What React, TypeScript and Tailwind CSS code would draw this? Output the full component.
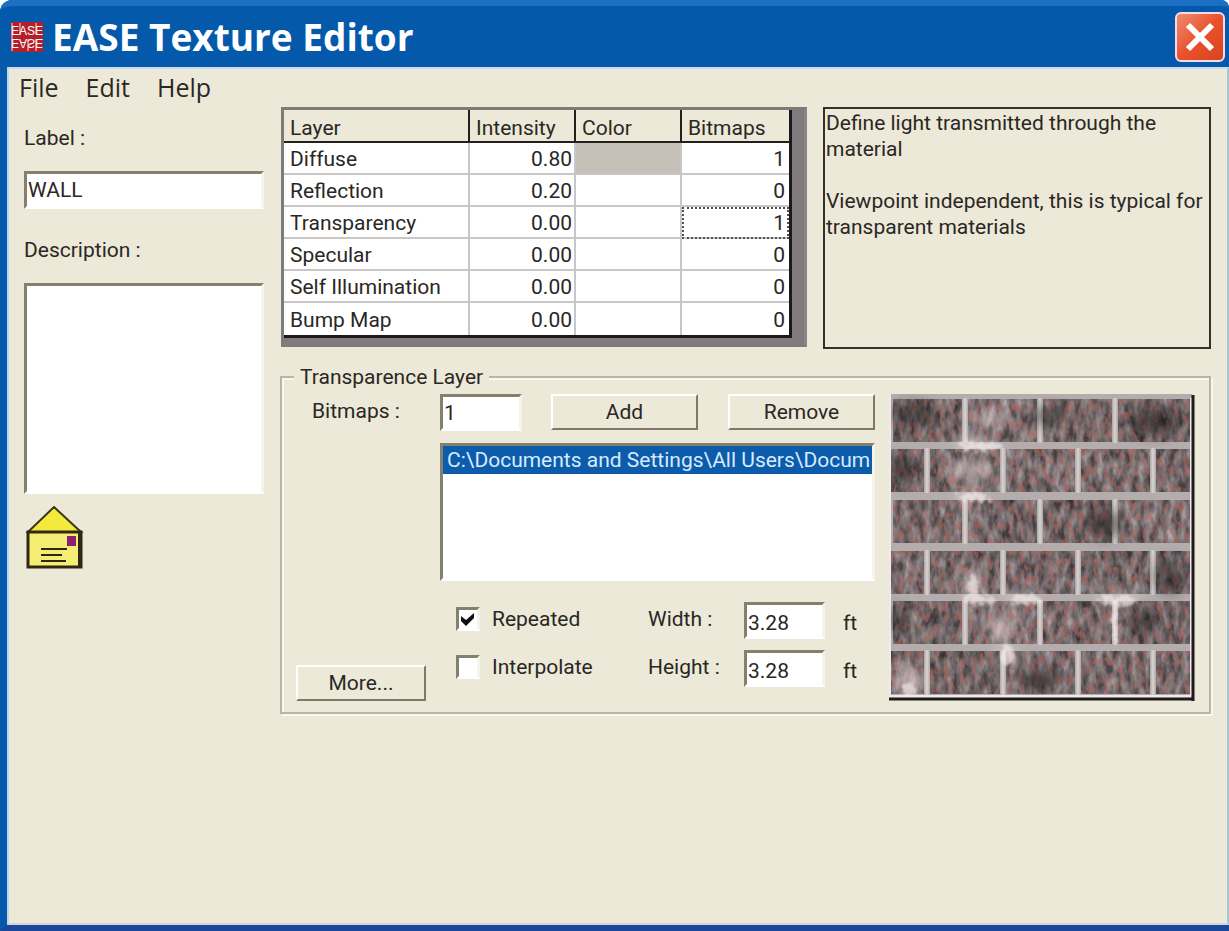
import React from "react";
import type { ReactNode } from "react";

const layers = [
  { name: "Diffuse", intensity: "0.80", filled: true, bitmaps: 1 },
  { name: "Reflection", intensity: "0.20", filled: false, bitmaps: 0 },
  { name: "Transparency", intensity: "0.00", filled: false, bitmaps: 1 },
  { name: "Specular", intensity: "0.00", filled: false, bitmaps: 0 },
  { name: "Self Illumination", intensity: "0.00", filled: false, bitmaps: 0 },
  { name: "Bump Map", intensity: "0.00", filled: false, bitmaps: 0 },
];

const sunken =
  "border-[3px] border-t-[#84806f] border-l-[#84806f] border-r-[#f6f4ea] border-b-white bg-white rounded-none outline-none";

function AppLogo() {
  return (
    <svg className="h-8 w-[34px] shrink-0" viewBox="0 0 34 32" aria-hidden="true">
      <rect x="1" y="1" width="32" height="30" fill="#b3202a" />
      <g fill="#ffffff" fontFamily="Liberation Sans" fontSize="12">
        <text x="1" y="14">EASE</text>
        <text x="1" y="-18" transform="scale(1,-1)">EASE</text>
      </g>
      <path d="M2 2V30M10 2V14M18 18V30M26 2V14M26 18V30" stroke="#f6dcdc" strokeWidth="1" />
    </svg>
  );
}

function Envelope() {
  return (
    <svg className="h-[66px] w-[60px]" viewBox="0 0 60 66" aria-hidden="true">
      <path d="M30 3 L57 28 H4 Z" fill="#f3ea3c" stroke="#3a3418" strokeWidth="2" />
      <rect x="4" y="28" width="53" height="35" fill="#f5ee72" stroke="#2e2812" strokeWidth="3" />
      <path d="M56 28V63" stroke="#2e2812" strokeWidth="4" />
      <rect x="43" y="32" width="9" height="10" fill="#8c2070" />
      <path d="M17 45H43M17 51H38M17 57H42" stroke="#2e2812" strokeWidth="2" />
    </svg>
  );
}

const oddJoints = [76, 151, 226];
const evenJoints = [38, 114, 189, 264];
const rowTops = [5, 55, 106, 157, 207, 257];

const bricks = rowTops.flatMap((y, row) => {
  const joints = row % 2 === 0 ? oddJoints : evenJoints;
  const starts = [row % 2 === 0 ? 1 : -4, ...joints];
  return starts.map((x, i) => {
    const end = i < joints.length ? joints[i] : 305;
    return { x: x + 3, y, w: end - x - 6, shade: (row * 3 + i * 5) % 4 };
  });
});

const shades = ["#5f5859", "#7a7274", "#6d6364", "#645c5d"];

function BrickPreview() {
  return (
    <svg className="h-[307px] w-[306px] shrink-0" viewBox="0 0 306 307" role="img" aria-label="Brick texture preview">
      <defs>
        <filter id="grain" x="0" y="0" width="1" height="1" colorInterpolationFilters="sRGB">
          <feTurbulence type="fractalNoise" baseFrequency="0.14 0.06" numOctaves="3" seed="7" />
          <feColorMatrix values="1.1 0 0 0 -0.09  1.1 0 0 0 -0.12  1.1 0 0 0 -0.11  0 0 0 0 0.7" />
        </filter>
        <filter id="rust" x="0" y="0" width="1" height="1" colorInterpolationFilters="sRGB">
          <feTurbulence type="fractalNoise" baseFrequency="0.2 0.11" numOctaves="2" seed="23" />
          <feColorMatrix values="0 0 0 0 0.68  0 0 0 0 0.4  0 0 0 0 0.37  0 7 0 0 -3.6" />
        </filter>
        <filter id="haze" x="-0.5" y="-0.5" width="2" height="2">
          <feGaussianBlur stdDeviation="6" />
        </filter>
        <filter id="chalk" x="-0.2" y="-0.2" width="1.4" height="1.4">
          <feTurbulence type="fractalNoise" baseFrequency="0.2" numOctaves="2" seed="4" result="n" />
          <feDisplacementMap in="SourceGraphic" in2="n" scale="14" />
          <feGaussianBlur stdDeviation="1" />
        </filter>
        <clipPath id="face">
          {bricks.map((b, i) => (
            <rect key={i} x={b.x} y={b.y} width={b.w} height="43" />
          ))}
        </clipPath>
        <clipPath id="wall">
          <rect width="303" height="303" />
        </clipPath>
      </defs>
      <rect width="303" height="303" fill="#b3adae" />
      <g stroke="#d2cccd" strokeWidth="3">
        {rowTops.map((y, row) =>
          (row % 2 === 0 ? oddJoints : evenJoints).map((x) => <path key={`${y}-${x}`} d={`M${x} ${y - 1}V${y + 44}`} />),
        )}
      </g>
      <g clipPath="url(#face)">
        {bricks.map((b, i) => (
          <rect key={i} x={b.x} y={b.y} width={b.w} height="43" fill={shades[b.shade]} />
        ))}
        <rect width="303" height="303" filter="url(#grain)" opacity="0.8" />
        <rect width="303" height="303" filter="url(#rust)" opacity="0.6" />
      </g>
      <g clipPath="url(#wall)">
        <g filter="url(#haze)" fill="#1f1d1e" opacity="0.5">
          <ellipse cx="24" cy="20" rx="22" ry="12" />
          <ellipse cx="160" cy="22" rx="16" ry="10" />
          <ellipse cx="266" cy="28" rx="28" ry="14" />
          <ellipse cx="12" cy="76" rx="14" ry="14" />
          <ellipse cx="216" cy="130" rx="18" ry="14" />
          <ellipse cx="281" cy="182" rx="16" ry="18" />
          <ellipse cx="254" cy="228" rx="13" ry="14" />
          <ellipse cx="10" cy="226" rx="10" ry="14" />
          <ellipse cx="150" cy="285" rx="24" ry="12" />
        </g>
        <g filter="url(#haze)" fill="#ecdede" opacity="0.55">
          <ellipse cx="86" cy="50" rx="22" ry="7" />
          <ellipse cx="80" cy="76" rx="26" ry="9" />
          <ellipse cx="102" cy="24" rx="18" ry="7" />
          <ellipse cx="80" cy="103" rx="14" ry="6" />
          <ellipse cx="83" cy="190" rx="9" ry="15" />
          <ellipse cx="130" cy="204" rx="18" ry="5" />
          <ellipse cx="230" cy="204" rx="24" ry="5" />
          <ellipse cx="112" cy="233" rx="12" ry="14" />
          <ellipse cx="20" cy="285" rx="14" ry="16" />
          <ellipse cx="118" cy="260" rx="12" ry="6" />
        </g>
        <g filter="url(#chalk)" fill="#fbf0f0" opacity="0.6">
          <ellipse cx="92" cy="52" rx="22" ry="4" />
          <ellipse cx="84" cy="103" rx="16" ry="4" />
          <ellipse cx="90" cy="206" rx="18" ry="4" />
          <ellipse cx="138" cy="206" rx="14" ry="5" />
          <ellipse cx="228" cy="207" rx="20" ry="4" />
          <ellipse cx="119" cy="262" rx="8" ry="10" />
          <ellipse cx="84" cy="192" rx="5" ry="12" />
          <ellipse cx="226" cy="230" rx="3" ry="18" />
          <ellipse cx="20" cy="296" rx="6" ry="8" />
        </g>
      </g>
      <path d="M1 0V302M0 302H302M302 4V302" stroke="#efe9ea" strokeWidth="2" fill="none" />
      <path d="M0 305H305M304 1V307" stroke="#1e1c1d" strokeWidth="3" fill="none" />
    </svg>
  );
}

function PushButton({ children, className }: { children: ReactNode; className: string }) {
  return (
    <button
      type="button"
      className={`h-9 border-2 border-t-white border-l-white border-r-[#7f7869] border-b-[#7f7869] bg-[#ece9d8] text-center leading-7 ${className}`}
    >
      {children}
    </button>
  );
}

function CheckField({ label, checked }: { label: string; checked: boolean }) {
  return (
    <label className="flex items-center gap-3">
      <span className="grid h-6 w-6">
        <input
          type="checkbox"
          defaultChecked={checked}
          className={`peer col-start-1 row-start-1 m-0 h-6 w-6 appearance-none ${sunken}`}
        />
        <svg className="pointer-events-none col-start-1 row-start-1 hidden h-6 w-6 peer-checked:block" viewBox="0 0 24 24" aria-hidden="true">
          <path d="M5 9 L10 13 L18 6 V11 L10 19 L5 14 Z" fill="#111111" />
        </svg>
      </span>
      {label}
    </label>
  );
}

function SizeField({ id, label }: { id: string; label: string }) {
  return (
    <div className="flex items-center">
      <label htmlFor={id} className="w-24 pb-1">
        {label}
      </label>
      <input id={id} defaultValue="3.28" className={`h-[37px] w-[81px] px-px pt-1 ${sunken}`} />
      <span className="pt-1 pl-[18px]">ft</span>
    </div>
  );
}

export default function App() {
  return (
    <div className="flex min-h-screen flex-col bg-white font-['Roboto','Liberation_Sans',sans-serif] text-[21px] leading-[26px] text-[#2a2724]">
      <div className="flex flex-1 flex-col rounded-tl-xl rounded-tr-lg border-b-[6px] border-l-[7px] border-b-[#1a479b] border-l-[#0559ab] bg-[#0559ab]">
        <header className="-ml-[7px] flex h-[67px] items-center justify-between rounded-tl-xl rounded-tr-lg border-t-[6px] border-t-[#1b70c4] bg-[#0559ab] pr-1 pl-[10px]">
          <div className="flex items-center gap-2">
            <AppLogo />
            <h1 className="font-['Open_Sans','Noto_Sans',sans-serif] text-[37px] leading-[48px] font-bold text-white">
              EASE Texture Editor
            </h1>
          </div>
          <button
            type="button"
            aria-label="Close"
            className="flex h-[50px] w-[50px] items-center justify-center rounded-md border-2 border-[#f3dde4] bg-linear-to-br from-[#ee8a70] via-[#e9512c] to-[#d8431f]"
          >
            <svg className="h-8 w-8" viewBox="0 0 32 32" aria-hidden="true">
              <path d="M4 4 L28 28 M28 4 L4 28" stroke="#ffffff" strokeWidth="6" />
            </svg>
          </button>
        </header>

        <div className="flex flex-1 flex-col border-2 border-t-[#c5dcf2] border-r-[#a6c6d4] border-b-[#cdd5dc] border-l-[#b9d9ee] bg-[#ece9d8]">
          <nav className="flex h-9 items-center gap-[27px] pl-[10px] font-['Open_Sans','Noto_Sans',sans-serif] text-[25px] leading-8">
            <button type="button">File</button>
            <button type="button">Edit</button>
            <button type="button">Help</button>
          </nav>

          <main className="flex gap-4 pr-4 pl-[15px]">
            <section className="flex w-[240px] shrink-0 flex-col pt-5">
              <label htmlFor="label">Label :</label>
              <input id="label" defaultValue="WALL" className={`mt-5 h-[38px] w-full px-px ${sunken}`} />
              <label htmlFor="description" className="mt-7">
                Description :
              </label>
              <textarea id="description" className={`mt-5 h-[211px] w-full resize-none ${sunken}`} />
              <div className="mt-2.5">
                <Envelope />
              </div>
            </section>

            <section className="flex min-w-0 flex-1 flex-col gap-[14px] pt-0.5">
              <div className="flex items-start gap-4 pl-px">
                <div className="w-[526px] shrink-0 border-[3px] border-[#807b79] border-r-[#8a8688] bg-[#7f7b7e] pb-1.5">
                  <table className="w-[508px] table-fixed border-separate border-spacing-0 border-r-[3px] border-b-[3px] border-[#1d191b] bg-white">
                    <colgroup>
                      <col className="w-[186px]" />
                      <col className="w-[106px]" />
                      <col className="w-[106px]" />
                      <col />
                    </colgroup>
                    <thead>
                      <tr className="h-[33px] bg-[#ece9d8] text-left">
                        {["Layer", "Intensity", "Color", "Bitmaps"].map((title, i) => (
                          <th
                            key={title}
                            scope="col"
                            className={`border-b-2 border-[#26201c] p-0 pt-1 pl-1.5 font-normal ${i < 3 ? "border-r-2" : ""}`}
                          >
                            {title}
                          </th>
                        ))}
                      </tr>
                    </thead>
                    <tbody>
                      {layers.map((layer, row) => (
                        <tr key={layer.name} className="h-8">
                          <td className={`border-r-2 border-[#c9c7c6] p-0 pt-0.5 pl-1.5 ${row < 5 ? "border-b-2" : ""}`}>
                            {layer.name}
                          </td>
                          <td className={`border-r-2 border-[#c9c7c6] p-0 pt-0.5 pr-0.5 text-right ${row < 5 ? "border-b-2" : ""}`}>
                            {layer.intensity}
                          </td>
                          <td
                            className={`border-r-2 border-[#c9c7c6] p-0 ${row < 5 ? "border-b-2" : ""} ${layer.filled ? "bg-[#c5c1b9]" : ""}`}
                          />
                          <td
                            className={`border-[#c9c7c6] p-0 pt-0.5 pr-1 text-right ${row < 5 ? "border-b-2" : ""} ${
                              row === 2 ? "outline-2 -outline-offset-2 outline-dotted outline-[#55504e]" : ""
                            }`}
                          >
                            {layer.bitmaps}
                          </td>
                        </tr>
                      ))}
                    </tbody>
                  </table>
                </div>

                <div className="h-[242px] min-w-0 flex-1 border-2 border-[#35302a] pt-px pl-px">
                  <p>Define light transmitted through the material</p>
                  <p className="pt-[26px]">Viewpoint independent, this is typical for transparent materials</p>
                </div>
              </div>

              <fieldset className="min-w-0 border-2 border-[#b9b5a3] shadow-[inset_2px_2px_0_#faf8ee,2px_2px_0_#faf8ee]">
                <legend className="ml-3 bg-[#ece9d8] px-1.5 leading-7">Transparence Layer</legend>
                <div className="flex gap-[14px] pt-[3px] pr-[14px] pb-[11px] pl-[14px]">
                  <div className="flex w-[130px] shrink-0 flex-col justify-between">
                    <label htmlFor="bitmaps" className="pt-1 pl-4">
                      Bitmaps :
                    </label>
                    <PushButton className="w-[130px]">More...</PushButton>
                  </div>
                  <div className="flex min-w-0 flex-1 flex-col">
                    <div className="flex items-start justify-between">
                      <input id="bitmaps" defaultValue="1" className={`h-[37px] w-[82px] px-px ${sunken}`} />
                      <div className="flex gap-[30px]">
                        <PushButton className="w-[147px]">Add</PushButton>
                        <PushButton className="w-[147px]">Remove</PushButton>
                      </div>
                    </div>
                    <ul role="listbox" aria-label="Bitmap files" className={`mt-3 h-[138px] overflow-hidden ${sunken}`}>
                      <li
                        role="option"
                        aria-selected="true"
                        className="bg-[#0d5bab] pl-1 leading-7 whitespace-nowrap text-[#d5ebff]"
                      >
                        C:\Documents and Settings\All Users\Docum
                      </li>
                    </ul>
                    <div className="mt-[21px] flex pl-4">
                      <div className="flex w-[192px] flex-col gap-[22px] pt-1">
                        <CheckField label="Repeated" checked />
                        <CheckField label="Interpolate" checked={false} />
                      </div>
                      <div className="flex flex-col gap-[11px]">
                        <SizeField id="width" label="Width :" />
                        <SizeField id="height" label="Height :" />
                      </div>
                    </div>
                  </div>
                  <BrickPreview />
                </div>
              </fieldset>
            </section>
          </main>
        </div>
      </div>
    </div>
  );
}
